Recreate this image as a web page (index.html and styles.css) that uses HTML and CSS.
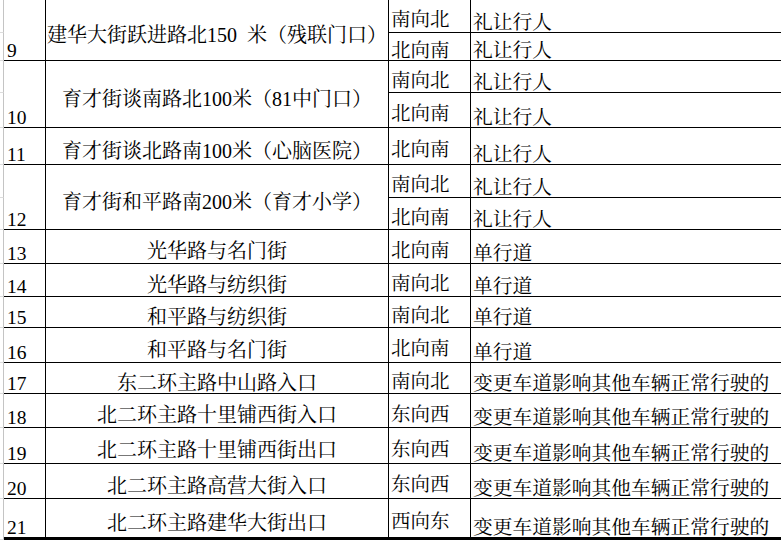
FILE: index.html
```html
<!DOCTYPE html>
<html lang="zh-CN">
<head>
<meta charset="utf-8">
<title>路口列表</title>
<link rel="stylesheet" href="styles.css">
</head>
<body>
<div class="sheet">
  <div class="g"></div><div class="num span2">9</div><div class="loc span2">建华大街跃进路北150 米（残联门口）</div><div class="dir">南向北</div><div class="note">礼让行人</div>
  <div class="g"></div><div class="dir">北向南</div><div class="note">礼让行人</div>

  <div class="g"></div><div class="num span2">10</div><div class="loc span2">育才街谈南路北100米（81中门口）</div><div class="dir">南向北</div><div class="note">礼让行人</div>
  <div class="g"></div><div class="dir">北向南</div><div class="note">礼让行人</div>

  <div class="g"></div><div class="num">11</div><div class="loc">育才街谈北路南100米（心脑医院）</div><div class="dir">北向南</div><div class="note">礼让行人</div>

  <div class="g"></div><div class="num span2">12</div><div class="loc span2">育才街和平路南200米（育才小学）</div><div class="dir">南向北</div><div class="note">礼让行人</div>
  <div class="g"></div><div class="dir">北向南</div><div class="note">礼让行人</div>

  <div class="g"></div><div class="num">13</div><div class="loc">光华路与名门街</div><div class="dir">北向南</div><div class="note">单行道</div>
  <div class="g"></div><div class="num">14</div><div class="loc">光华路与纺织街</div><div class="dir">南向北</div><div class="note">单行道</div>
  <div class="g"></div><div class="num">15</div><div class="loc">和平路与纺织街</div><div class="dir">南向北</div><div class="note">单行道</div>
  <div class="g"></div><div class="num">16</div><div class="loc">和平路与名门街</div><div class="dir">北向南</div><div class="note">单行道</div>
  <div class="g"></div><div class="num">17</div><div class="loc">东二环主路中山路入口</div><div class="dir">南向北</div><div class="note">变更车道影响其他车辆正常行驶的</div>
  <div class="g"></div><div class="num">18</div><div class="loc">北二环主路十里铺西街入口</div><div class="dir">东向西</div><div class="note">变更车道影响其他车辆正常行驶的</div>
  <div class="g"></div><div class="num">19</div><div class="loc">北二环主路十里铺西街出口</div><div class="dir">东向西</div><div class="note">变更车道影响其他车辆正常行驶的</div>
  <div class="g"></div><div class="num">20</div><div class="loc">北二环主路高营大街入口</div><div class="dir">东向西</div><div class="note">变更车道影响其他车辆正常行驶的</div>
  <div class="g last"></div><div class="num last">21</div><div class="loc last">北二环主路建华大街出口</div><div class="dir last">西向东</div><div class="note last">变更车道影响其他车辆正常行驶的</div>
</div>
</body>
</html>
```
FILE: styles.css
```css
html, body {
  margin: 0;
  padding: 0;
  background: #ffffff;
  overflow: hidden;
}

.sheet {
  display: grid;
  grid-template-columns: 4px 42px 343px 82px 360px;
  grid-template-rows: 33px 28px 32px 35px 37px 33px 32px 34px 33px 31px 35px 31px 34px 36px 35px 41px;
  font-family: "Liberation Serif", "Noto Serif CJK SC", "Noto Sans CJK SC", serif;
  font-size: 19.5px;
  color: #000;
  line-height: 22px;
  white-space: nowrap;
}

.sheet > div {
  box-sizing: border-box;
  border-right: 1px solid #000;
  border-bottom: 1px solid #000;
  display: flex;
  overflow: hidden;
}

.span2 {
  grid-row: span 2;
}

.g {
  border-right-color: #c4c4c4 !important;
  border-bottom-color: #dcdcdc !important;
}

.num {
  align-items: flex-end;
  padding-left: 3px;
  line-height: 19px;
}

.loc {
  align-items: center;
  justify-content: center;
  font-size: 20px;
  padding-top: 9px;
  word-spacing: 5px;
}

.dir {
  align-items: center;
  padding-left: 2px;
  padding-top: 8px;
}

.note {
  align-items: flex-end;
  padding-left: 2px;
  font-size: 19.75px;
  line-height: 19px;
}

.sheet > .last {
  border-bottom-width: 3px;
}

.sheet > .g.last {
  border-bottom: 1px solid #dcdcdc;
}
```
